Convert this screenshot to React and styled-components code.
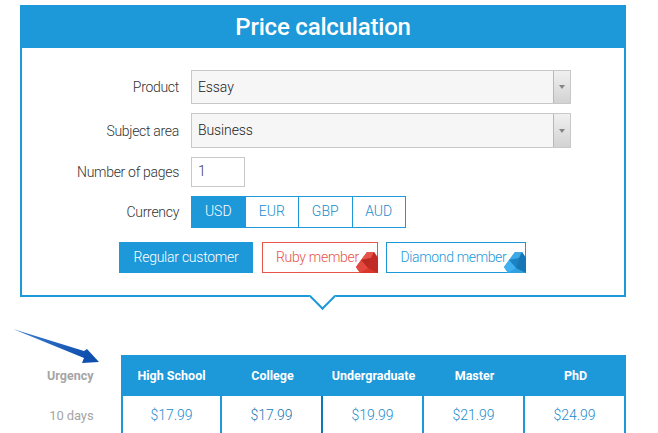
import React from "react"
import styled, { createGlobalStyle } from "styled-components"

const blue = "#1d98d9"
const currencies = ["USD", "EUR", "GBP", "AUD"]
const levels = [
	{ name: "High School", price: "$17.99" },
	{ name: "College", price: "$17.99", dark: true },
	{ name: "Undergraduate", price: "$19.99" },
	{ name: "Master", price: "$21.99" },
	{ name: "PhD", price: "$24.99" },
]

const Gem = ({ base, light, lighter, dark, darker }) => (
	<GemIcon viewBox="0 0 22 22" width="22" height="22">
		<polygon points="0,16 11,1 18,1 22,7 22,22 4,22" fill={base} />
		<polygon points="5,9 11,1 18,1 15,7" fill={light} />
		<polygon points="5,9 15,7 12,17" fill={dark} />
		<polygon points="15,7 18,1 22,7 22,22 12,17" fill={darker} />
		<polygon points="0,16 5,9 12,17 4,22" fill={lighter} />
	</GemIcon>
)

const Select = ({ value, tall }) => (
	<SelectBox $tall={tall}>
		<SelectValue $tall={tall}>{value}</SelectValue>
		<SelectArrow>
			<svg viewBox="0 0 6 4" width="6" height="4">
				<polygon points="0,0 6,0 3,4" fill="#858585" />
			</svg>
		</SelectArrow>
	</SelectBox>
)

const App = () => (
	<Page>
		<GlobalStyle />
		<Panel>
			<Title>Price calculation</Title>
			<Form>
				<Row>
					<Label>Product</Label>
					<Select value="Essay" />
				</Row>
				<Row>
					<Label>Subject area</Label>
					<Select value="Business" tall />
				</Row>
				<Row>
					<Label>Number of pages</Label>
					<Pages>1</Pages>
				</Row>
				<Row>
					<Label>Currency</Label>
					<Currencies>
						{currencies.map((c, i) => (
							<Currency key={c} $active={i === 0}>
								{c}
							</Currency>
						))}
					</Currencies>
				</Row>
				<Customers>
					<Regular>Regular customer</Regular>
					<Member $color="#e8534a" $width={116} $spacing={-0.3}>
						Ruby member
						<Gem
							base="#d9362c"
							light="#e4544a"
							lighter="#e2483d"
							dark="#b92a23"
							darker="#c02c25"
						/>
					</Member>
					<Member $color={blue} $width={140} $spacing={-0.35}>
						Diamond member
						<Gem
							base="#2f9fe0"
							light="#3fa8e6"
							lighter="#3fb0f0"
							dark="#1c82c4"
							darker="#1776b4"
						/>
					</Member>
				</Customers>
			</Form>
			<Notch />
		</Panel>
		<Arrow viewBox="0 0 90 36" width="90" height="36">
			<defs>
				<linearGradient id="arrowFill" x1="0" y1="0" x2="1" y2="0.4">
					<stop offset="0" stopColor="#3f7fd0" />
					<stop offset="1" stopColor="#0f4fb0" />
				</linearGradient>
			</defs>
			<polygon
				points="0,0 71,22 74,20 86,33 69,34 71,29"
				fill="url(#arrowFill)"
			/>
		</Arrow>
		<Prices>
			<Side>
				<SideHead>Urgency</SideHead>
				<SideCell>10 days</SideCell>
			</Side>
			<Table>
				{levels.map((l) => (
					<Head key={l.name}>{l.name}</Head>
				))}
				{levels.map((l, i) => (
					<Cell key={l.name} $first={i === 0} $dark={l.dark}>
						{l.price}
					</Cell>
				))}
			</Table>
		</Prices>
	</Page>
)

const GlobalStyle = createGlobalStyle`
	html, body {
		margin: 0;
		background: #fff;
		overflow: hidden;
	}

	body {
		font-family: Roboto, "Liberation Sans", sans-serif;
	}
`

const Page = styled.div`
	position: relative;
	height: 433px;
	overflow: hidden;
	padding: 5px 32px 0 20px;
	box-sizing: border-box;
`

const Panel = styled.div`
	position: relative;
	width: 606px;
	height: 292px;
	box-sizing: border-box;
	border: 2px solid ${blue};
`

const Title = styled.div`
	height: 41px;
	background: ${blue};
	color: #fff;
	font-size: 24px;
	letter-spacing: -0.2px;
	font-weight: 500;
	line-height: 41px;
	text-align: center;
`

const Form = styled.div`
	display: flex;
	flex-direction: column;
	padding-top: 22px;
`

const Row = styled.div`
	display: flex;
	align-items: center;
	gap: 12px;
	margin-bottom: 9px;
`

const Label = styled.div`
	width: 157px;
	text-align: right;
	font-size: 14px;
	letter-spacing: -0.3px;
	font-weight: 300;
	color: #333;
`

const SelectBox = styled.div`
	display: flex;
	width: 380px;
	height: ${(p) => (p.$tall ? 35 : 34)}px;
	box-sizing: border-box;
	border: 1px solid #c8c8c8;
	background: #f6f6f6;
`

const SelectValue = styled.div`
	flex: 1;
	padding-left: 6px;
	font-size: 14px;
	letter-spacing: -0.1px;
	font-weight: 300;
	line-height: ${(p) => (p.$tall ? 33 : 32)}px;
	color: #222;
`

const SelectArrow = styled.div`
	display: flex;
	align-items: center;
	justify-content: center;
	width: 16px;
	border-left: 1px solid #b8b8b8;
	background: linear-gradient(#f0f0f0, #d2d2d2);
`

const Pages = styled.div`
	width: 54px;
	height: 30px;
	box-sizing: border-box;
	border: 1px solid #c8c8c8;
	padding-left: 6px;
	font-size: 14px;
	font-weight: 300;
	line-height: 27px;
	color: #3a3a5a;
`

const Currencies = styled.div`
	display: flex;
	width: 215px;
	height: 32px;
	box-sizing: border-box;
	border: 1px solid ${blue};
`

const Currency = styled.div`
	flex: 1;
	box-sizing: border-box;
	font-size: 14px;
	font-weight: 300;
	line-height: 28px;
	text-align: center;
	color: ${(p) => (p.$active ? "#fff" : "#1a8ccc")};
	background: ${(p) => (p.$active ? blue : "#fff")};

	& + & {
		border-left: 1px solid ${blue};
	}
`

const Customers = styled.div`
	display: flex;
	gap: 8.5px;
	padding: 5px 0 0 97px;
`

const Regular = styled.div`
	width: 134px;
	height: 31px;
	background: ${blue};
	color: #fff;
	font-size: 14px;
	letter-spacing: -0.25px;
	font-weight: 300;
	line-height: 30px;
	text-align: center;
`

const Member = styled.div`
	position: relative;
	width: ${(p) => p.$width}px;
	height: 31px;
	box-sizing: border-box;
	border: 1px solid ${(p) => p.$color};
	color: ${(p) => p.$color};
	font-size: 14px;
	letter-spacing: ${(p) => p.$spacing}px;
	font-weight: 300;
	line-height: 28px;
	padding-left: 13.5px;
	white-space: nowrap;
`

const GemIcon = styled.svg`
	position: absolute;
	right: -1px;
	bottom: -1px;
`

const Notch = styled.div`
	position: absolute;
	left: 291px;
	bottom: -11px;
	width: 19px;
	height: 19px;
	box-sizing: border-box;
	background: #fff;
	border-right: 2px solid ${blue};
	border-bottom: 2px solid ${blue};
	transform: rotate(45deg);
`

const Arrow = styled.svg`
	position: absolute;
	left: 13px;
	top: 329px;
`

const Prices = styled.div`
	display: flex;
	margin-top: 58px;
	margin-left: -20px;
`

const Side = styled.div`
	width: 93.5px;
	margin-right: 27.5px;
	text-align: right;
	font-size: 12px;
	color: #a5a5a5;
`

const SideHead = styled.div`
	height: 41px;
	line-height: 41px;
	font-size: 12.5px;
	font-weight: 700;
`

const SideCell = styled.div`
	height: 38px;
	line-height: 39px;
	font-size: 13px;
	letter-spacing: -0.1px;
`

const Table = styled.div`
	display: grid;
	grid-template-columns: repeat(5, 101px);
	width: 505px;
`

const Head = styled.div`
	height: 41px;
	background: ${blue};
	color: #fff;
	font-size: 12.5px;
	font-weight: 700;
	line-height: 41px;
	text-align: center;
`

const Cell = styled.div`
	height: 38px;
	box-sizing: border-box;
	border-right: 2px solid ${(p) => (p.$dark ? "#0d78b8" : blue)};
	border-left: ${(p) => (p.$first ? `2px solid ${blue}` : "none")};
	font-size: 14px;
	font-weight: 300;
	line-height: 38px;
	text-align: center;
	color: ${(p) => (p.$dark ? "#1a78b8" : "#1a8ccc")};
`

export default App
